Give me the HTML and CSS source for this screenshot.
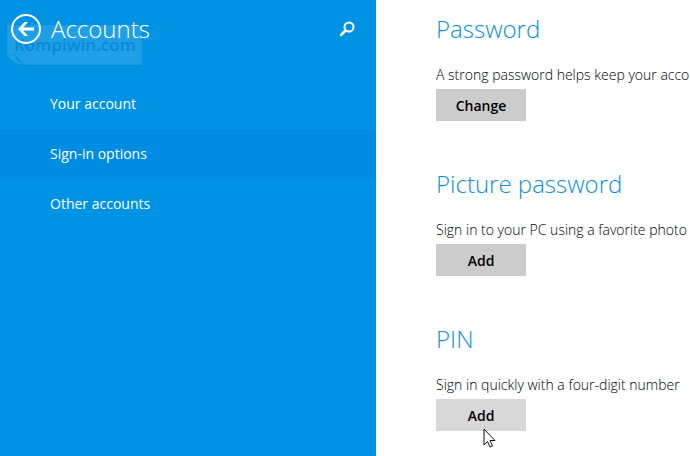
FILE: index.html
```html
<!DOCTYPE html>
<html lang="en">

<head>
    <meta charset="UTF-8">
    <meta name="viewport" content="width=device-width, initial-scale=1.0">
    <title>Accounts</title>
    <link rel="stylesheet" href="styles.css">
</head>

<body>
    <div class="settings">
        <aside class="sidebar">
            <header class="top">
                <button class="icon-btn" type="button" aria-label="Back">
                    <svg width="30" height="30" viewBox="0 0 30 30">
                        <circle cx="15" cy="15" r="14" fill="none" stroke="#fff" stroke-width="2" />
                        <path d="M7 15L13.500 8H17L12 13.500H23V16.500H12L17 22H13.500Z" fill="#fff" />
                    </svg>
                </button>
                <h1 class="title">Accounts</h1>
                <button class="icon-btn" type="button" aria-label="Search">
                    <svg width="16" height="16" viewBox="0 0 16 16" fill="none" stroke="#fff">
                        <circle cx="10" cy="6" r="4.500" stroke-width="2" />
                        <path d="M6.500 9.500L2 14" stroke-width="2.500" stroke-linecap="round" />
                    </svg>
                </button>
                <div class="watermark">
                    <svg class="note" width="138" height="44" viewBox="0 0 138 44">
                        <path d="M1 1H136V41H19L9 31H1Z" fill="#fff" fill-opacity="0.120" stroke="#0078c8" stroke-opacity="0.150" />
                        <path d="M1 31H9L11 36L19 41Q7 41 1 31Z" fill="#fff" fill-opacity="0.120" stroke="#0078c8" stroke-opacity="0.200" />
                    </svg>
                    <span class="brand">Kompiwin.com</span>
                </div>
            </header>
            <nav class="menu">
                <a href="#account">Your account</a>
                <a href="#signin" class="active">Sign-in options</a>
                <a href="#other">Other accounts</a>
            </nav>
        </aside>
        <main class="content" id="signin">
            <section class="option">
                <h2>Password</h2>
                <p>A strong password helps keep your account secure.</p>
                <button class="btn" type="button">Change</button>
            </section>
            <section class="option">
                <h2>Picture password</h2>
                <p>Sign in to your PC using a favorite photo</p>
                <button class="btn" type="button">Add</button>
            </section>
            <section class="option">
                <h2>PIN</h2>
                <p>Sign in quickly with a four-digit number</p>
                <button class="btn hover" type="button">Add
                    <svg class="pointer" width="13" height="20" viewBox="0 0 13 20">
                        <path d="M1 1V17L4.500 13.500L7 19L9.500 18L7 12.500H12Z" fill="#fff" stroke="#111" />
                    </svg>
                </button>
            </section>
        </main>
    </div>
</body>

</html>
```
FILE: styles.css
```css
* {
    box-sizing: border-box;
}

body {
    margin: 0;
    font-family: "Segoe UI", "Open Sans", "Noto Sans", sans-serif;
    font-size: 14px;
    color: #000;
    background: #fff;
}

.settings {
    display: flex;
    min-height: 100vh;
    overflow: hidden;
}

.sidebar {
    flex: 0 0 54.5%;
    color: #fff;
    background: #0093e3;
}

.top {
    position: relative;
    display: flex;
    align-items: center;
    gap: 10px;
    height: 79px;
    padding: 0 21px 22px 11px;
}

.icon-btn {
    display: flex;
    padding: 0;
    border: 0;
    background: none;
}

.title {
    flex: 1;
    margin: 0;
    font-size: 24px;
    font-weight: 300;
    line-height: 36px;
}

/* site stamp over the header */
.watermark {
    position: absolute;
    left: 6px;
    top: 24px;
    pointer-events: none;
}

.note {
    display: block;
}

.brand {
    position: absolute;
    left: 8px;
    top: 9px;
    font-size: 17px;
    font-weight: 600;
    line-height: 24px;
    color: #0078c8;
    opacity: 0.6;
}

.icon-btn,
.title {
    z-index: 1;
}

.menu a {
    display: block;
    padding-left: 50px;
    line-height: 50px;
    color: #fff;
    text-decoration: none;
}

.menu .active {
    background: #008ce2;
}

.content {
    flex: 1;
    min-width: 0;
    padding: 11px 0 0 60px;
    white-space: nowrap;
}

.option {
    height: 155px;
}

.option h2 {
    margin: 0 0 17px;
    font-size: 24px;
    font-weight: 300;
    line-height: 36px;
    color: #0a8fe0;
}

.option p {
    margin: 0 0 3px;
    font-weight: 300;
    line-height: 22px;
}

.btn {
    position: relative;
    width: 90px;
    height: 32px;
    padding: 0;
    border: 0;
    font-family: inherit;
    font-size: 14px;
    font-weight: 600;
    color: #000;
    background: #ccc;
}

.hover {
    background: #d8d8d8;
}

.pointer {
    position: absolute;
    left: 47px;
    top: 29px;
}
```
